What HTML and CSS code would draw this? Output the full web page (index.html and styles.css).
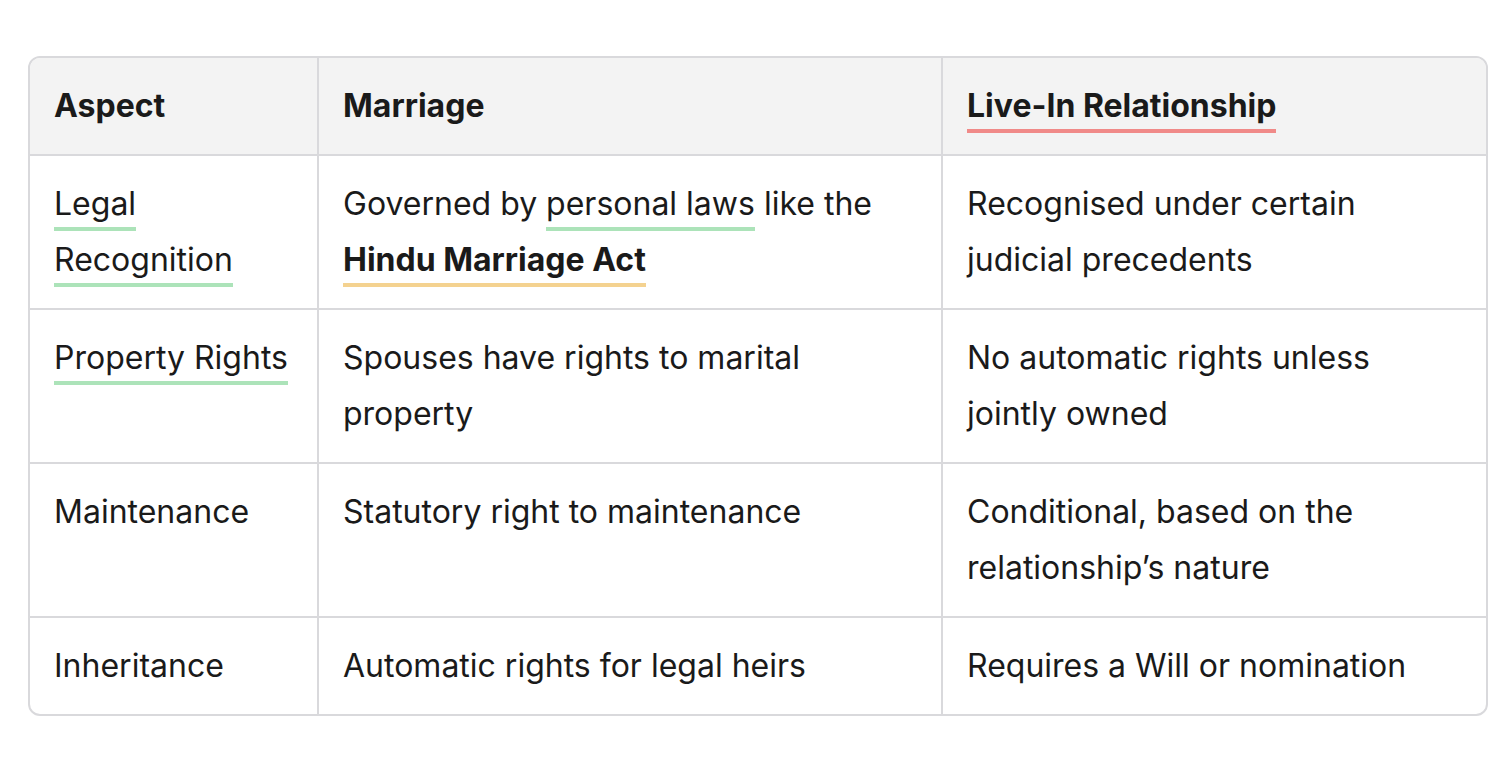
FILE: index.html
```html
<!DOCTYPE html>
<html lang="en">
<head>
<meta charset="utf-8">
<title>Marriage vs Live-In Relationship</title>
<link rel="stylesheet" href="styles.css">
</head>
<body>
<div class="table">
  <div class="cell head">Aspect</div>
  <div class="cell head">Marriage</div>
  <div class="cell head last-col"><span class="mark red">Live-In Relationship</span></div>

  <div class="cell"><span class="mark green">Legal Recognition</span></div>
  <div class="cell">Governed by <span class="mark green">personal laws</span> like the <strong class="mark yellow">Hindu Marriage Act</strong></div>
  <div class="cell last-col">Recognised under certain judicial precedents</div>

  <div class="cell"><span class="mark green">Property Rights</span></div>
  <div class="cell">Spouses have rights to marital property</div>
  <div class="cell last-col">No automatic rights unless jointly owned</div>

  <div class="cell">Maintenance</div>
  <div class="cell">Statutory right to maintenance</div>
  <div class="cell last-col">Conditional, based on the relationship’s nature</div>

  <div class="cell last-row">Inheritance</div>
  <div class="cell last-row">Automatic rights for legal heirs</div>
  <div class="cell last-row last-col">Requires a Will or nomination</div>
</div>
</body>
</html>
```

FILE: styles.css
```css
html, body {
  margin: 0;
  padding: 0;
  background: #ffffff;
}

body {
  font-family: Inter, "Noto Sans", sans-serif;
  font-size: 32px;
  line-height: 56px;
  color: #1a1a1a;
}

.table {
  margin: 56px 10px 0 28px;
  width: 1460px;
  box-sizing: border-box;
  border: 2px solid #d9d9dc;
  border-radius: 12px;
  overflow: hidden;
  display: grid;
  grid-template-columns: 289px 624px 1fr;
}

.cell {
  padding: 20px 24px;
  border-right: 2px solid #d9d9dc;
  border-bottom: 2px solid #d9d9dc;
}

.cell.last-col {
  border-right: none;
}

.cell.last-row {
  border-bottom: none;
}

.head {
  background: #f3f3f3;
  font-weight: 700;
}

.mark {
  padding-bottom: 4px;
  border-bottom: 4px solid transparent;
}

strong.mark {
  font-weight: 700;
}

.green {
  border-bottom-color: #ace3b9;
}

.yellow {
  border-bottom-color: #f4d290;
}

.red {
  border-bottom-color: #f08a88;
}
```
